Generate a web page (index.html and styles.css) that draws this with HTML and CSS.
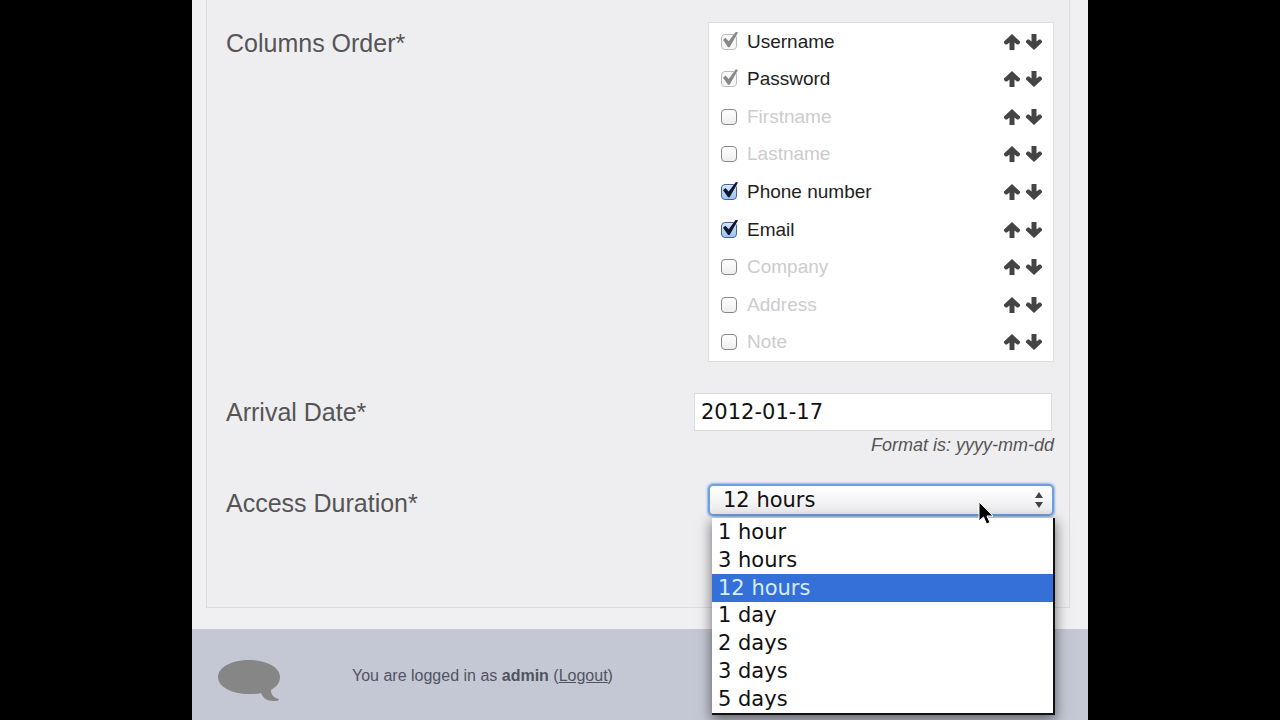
FILE: index.html
```html
<!DOCTYPE html>
<html lang="en">
<head>
    <meta charset="UTF-8">
    <title>Import accounts</title>
    <link rel="stylesheet" href="styles.css">
</head>
<body>
<svg class="defs" aria-hidden="true">
    <symbol id="up" viewBox="0 0 18 18">
        <path d="M9 1 L17 8.5 V10 L15.500 11.500 H14 L11.500 9.500 V17 H6.500 V9.500 L4 11.500 H2.500 L1 10 V8.500 Z"/>
    </symbol>
    <symbol id="down" viewBox="0 0 18 18">
        <path d="M9 17 L17 9.500 V8 L15.500 6.500 H14 L11.500 8.500 V1 H6.500 V8.500 L4 6.500 H2.500 L1 8 V9.500 Z"/>
    </symbol>
</svg>
<div class="page">
    <form class="main">
        <div class="frame">
            <div class="row">
                <div class="label">Columns Order*</div>
                <ul class="columns">
                    <li>
                        <label><input type="checkbox" checked disabled>Username</label>
                        <button type="button" aria-label="Move up"><svg><use href="#up"/></svg></button>
                        <button type="button" aria-label="Move down"><svg><use href="#down"/></svg></button>
                    </li>
                    <li>
                        <label><input type="checkbox" checked disabled>Password</label>
                        <button type="button" aria-label="Move up"><svg><use href="#up"/></svg></button>
                        <button type="button" aria-label="Move down"><svg><use href="#down"/></svg></button>
                    </li>
                    <li class="off">
                        <label><input type="checkbox">Firstname</label>
                        <button type="button" aria-label="Move up"><svg><use href="#up"/></svg></button>
                        <button type="button" aria-label="Move down"><svg><use href="#down"/></svg></button>
                    </li>
                    <li class="off">
                        <label><input type="checkbox">Lastname</label>
                        <button type="button" aria-label="Move up"><svg><use href="#up"/></svg></button>
                        <button type="button" aria-label="Move down"><svg><use href="#down"/></svg></button>
                    </li>
                    <li>
                        <label><input type="checkbox" checked>Phone number</label>
                        <button type="button" aria-label="Move up"><svg><use href="#up"/></svg></button>
                        <button type="button" aria-label="Move down"><svg><use href="#down"/></svg></button>
                    </li>
                    <li>
                        <label><input type="checkbox" checked>Email</label>
                        <button type="button" aria-label="Move up"><svg><use href="#up"/></svg></button>
                        <button type="button" aria-label="Move down"><svg><use href="#down"/></svg></button>
                    </li>
                    <li class="off">
                        <label><input type="checkbox">Company</label>
                        <button type="button" aria-label="Move up"><svg><use href="#up"/></svg></button>
                        <button type="button" aria-label="Move down"><svg><use href="#down"/></svg></button>
                    </li>
                    <li class="off">
                        <label><input type="checkbox">Address</label>
                        <button type="button" aria-label="Move up"><svg><use href="#up"/></svg></button>
                        <button type="button" aria-label="Move down"><svg><use href="#down"/></svg></button>
                    </li>
                    <li class="off">
                        <label><input type="checkbox">Note</label>
                        <button type="button" aria-label="Move up"><svg><use href="#up"/></svg></button>
                        <button type="button" aria-label="Move down"><svg><use href="#down"/></svg></button>
                    </li>
                </ul>
            </div>
            <div class="row">
                <label class="label" for="arrival">Arrival Date*</label>
                <div class="date">
                    <input type="text" id="arrival" value="2012-01-17">
                    <p class="hint">Format is: yyyy-mm-dd</p>
                </div>
            </div>
            <div class="row">
                <label class="label" for="duration">Access Duration*</label>
                <div class="duration">
                    <select id="duration">
                        <option>1 hour</option>
                        <option>3 hours</option>
                        <option selected>12 hours</option>
                        <option>1 day</option>
                        <option>2 days</option>
                        <option>3 days</option>
                        <option>5 days</option>
                    </select>
                    <svg class="stepper" viewBox="0 0 10 18" aria-hidden="true">
                        <path d="M5 1 L9 7 H1 Z M5 17 L9 11 H1 Z"/>
                    </svg>
                    <ul class="menu" role="listbox" aria-label="Access Duration">
                        <li role="option">1 hour</li>
                        <li role="option">3 hours</li>
                        <li role="option" class="current" aria-selected="true">12 hours</li>
                        <li role="option">1 day</li>
                        <li role="option">2 days</li>
                        <li role="option">3 days</li>
                        <li role="option">5 days</li>
                    </ul>
                    <svg class="pointer" viewBox="0 0 16 24" aria-hidden="true">
                        <path d="M1 1 V20 L5.500 16 L8.500 23 L12 21.500 L9 15 H15 Z"/>
                    </svg>
                </div>
            </div>
        </div>
    </form>
    <div class="footer">
        <svg class="bubble" viewBox="0 0 62 42" aria-hidden="true">
            <path d="M31 0 C48 0 62 7 62 17 C62 23 58 27 53 30 C53 35 56 38 61 39 C61 41 58 41 55 41 C49 41 45 38 43 33 C39 34 35 34 31 34 C14 34 0 27 0 17 C0 7 14 0 31 0 Z"/>
        </svg>
        <p>You are logged in as <strong>admin</strong> (<a href="#">Logout</a>)</p>
    </div>
</div>
</body>
</html>
```
FILE: styles.css
```css
*{box-sizing: border-box;}
body{margin: 0; background: #000; font-family: "Liberation Sans", Arial, sans-serif; overflow: hidden;}
ul{list-style: none; margin: 0; padding: 0;}
p{margin: 0;}
.defs{display: none;}

.page{width: 70%; min-height: 100vh; margin: 0 auto; background: #f0f0f3; display: flex;
    flex-direction: column;}
.main{padding: 0 18px 21px 14px;}
.frame{display: flex; flex-direction: column; padding: 22px 15px 85px 19px;
    background: #eeeef1; border: 1px solid #dcdce0; border-top: 0;}
.row{display: grid; grid-template-columns: 1fr 360px;}
.label{color: #555; font-size: 25px; line-height: 38px;}
.row:first-child .label{padding-top: 2px;}

/* columns list */
.columns{display: grid; grid-auto-rows: 1fr; min-height: 340px; margin: 0 0 31px 14px;
    padding: 0 10px 0 12px; background: #fff; border: 1px solid #dedee2;}
.columns li{display: flex; align-items: center; gap: 4px; font-size: 19px; color: #222;}
.columns label{flex: 1; display: flex; align-items: center; gap: 10px;}
.columns .off label{color: #ccc;}
.columns button{width: 18px; height: 18px; padding: 0; border: 0; background: none;}
.columns svg{display: block; width: 18px; height: 18px; fill: #444;}
.columns input{appearance: none; position: relative; width: 16px; height: 16px; margin: 0;
    border: 1px solid #888; border-radius: 4px;
    background: linear-gradient(#fff, #eee);}
.columns input:checked{border-color: #456499; background: linear-gradient(#d5e5fa, #9dc3f2);}
.columns input:checked::after{content: ""; position: absolute; left: 1px; top: -3px;
    width: 15px; height: 16px; background: #101830;
    clip-path: polygon(0 52%, 16% 38%, 38% 60%, 86% 0, 100% 4%, 44% 96%, 34% 96%);}
.columns input:checked:disabled{border-color: #bbb; background: #f8f8f8;}
.columns input:checked:disabled::after{background: #888;}

/* arrival date */
.date{display: flex; flex-direction: column;}
.date input{height: 38px; margin-right: 2px; padding: 0 6px; border: 1px solid #dcdce0;
    background: #fff; color: #111; font: 21px "DejaVu Sans", sans-serif;}
.hint{padding: 3px 0 28px; color: #555; font-size: 18px; font-style: italic; line-height: 22px;
    text-align: right;}

/* access duration */
.duration{position: relative; margin-left: 14px;}
.duration select{appearance: none; display: block; width: 100%; height: 32px; padding: 0 13px;
    border: 2px solid #6f9fdf; border-radius: 5px; outline: 0;
    background: linear-gradient(#fff, #ebebed); box-shadow: 0 0 2px 1px #8fb4e6;
    color: #111; font: 21px "DejaVu Sans", sans-serif;}
.stepper{position: absolute; right: 10px; top: 7px; width: 10px; height: 18px; fill: #444;}
.menu{position: absolute; left: 4px; right: -1px; top: 34px; z-index: 1; display: grid;
    grid-auto-rows: 1fr; min-height: 197px; background: #fff; border-right: 2px solid #111;
    border-bottom: 2px solid #111; box-shadow: 0 4px 12px 1px rgba(0,0,0,.5);
    color: #111; font: 21px "DejaVu Sans", sans-serif;}
.menu li{display: flex; align-items: center; padding: 0 6px;}
.menu .current{background: #3470d8; color: #d5ecff;}
.pointer{position: absolute; right: 60px; top: 17px; z-index: 2; width: 16px; height: 24px;
    fill: #000; stroke: #fff; stroke-width: 1;}

.footer{flex: 1; display: flex; align-items: center; gap: 72px; padding: 2px 26px 0;
    background: #c4c8d4; color: #505462; font-size: 16px;}
.footer a{color: inherit;}
.bubble{width: 62px; height: 42px; margin-top: 10px; fill: #868686;}
```
